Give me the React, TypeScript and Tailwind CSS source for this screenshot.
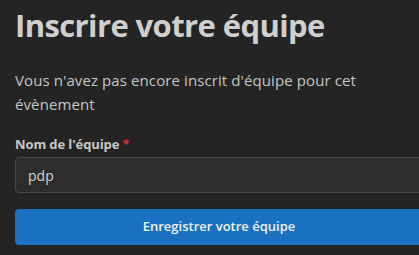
import React from 'react';

const App: React.FC = () => {
    return (
        <div className="w-[419px] h-[255px] overflow-hidden bg-[#242424] font-['Open_Sans',sans-serif]">
            <div className="w-[408px] ml-[15px] pt-[3px]">
                <h1 className="text-[31px] leading-[44px] font-bold text-[#cfcfcf] tracking-[-0.6px]">
                    Inscrire votre équipe
                </h1>
                <p className="mt-[21px] text-[15px] leading-[24px] text-[#c6c6c6] tracking-[0.1px]">
                    Vous n'avez pas encore inscrit d'équipe pour cet évènement
                </p>
                <div className="mt-[19px]">
                    <label className="block text-[13px] leading-[18px] font-bold text-[#c8c8c8] tracking-[-0.1px]">
                        Nom de l'équipe <span className="text-[#d9302c]">*</span>
                    </label>
                    <input
                        readOnly
                        value="pdp"
                        className="mt-[4px] block w-full h-[36px] px-[12px] text-[14px] text-[#d4d4d4] bg-[#2d2d2d] border border-[#474747] rounded-[4px] outline-none"
                    />
                </div>
                <button className="mt-[16px] w-full h-[36px] rounded-[4px] bg-[#1a71c1] text-[13px] font-semibold text-[#f2f2f2]">
                    Enregistrer votre équipe
                </button>
            </div>
        </div>
    );
};

export default App;
